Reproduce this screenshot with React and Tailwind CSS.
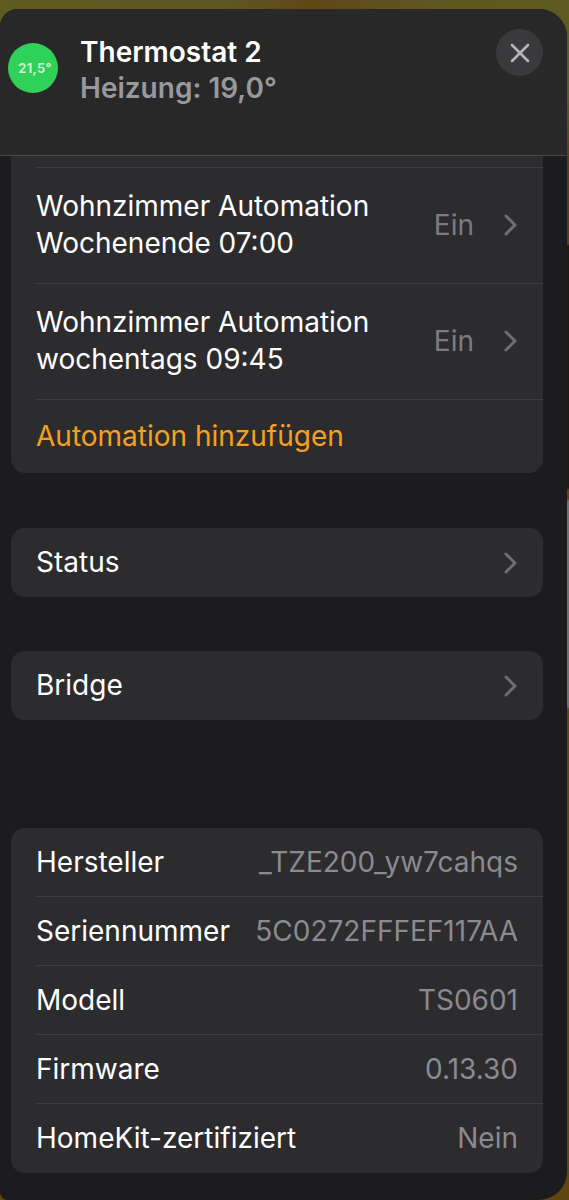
import { X } from "lucide-react";

const automations = [
    { title: "Wohnzimmer Automation Wochenende 07:00", state: "Ein" },
    { title: "Wohnzimmer Automation wochentags 09:45", state: "Ein" },
];

const details = [
    { label: "Hersteller", value: "_TZE200_yw7cahqs" },
    { label: "Seriennummer", value: "5C0272FFFEF117AA" },
    { label: "Modell", value: "TS0601" },
    { label: "Firmware", value: "0.13.30" },
    { label: "HomeKit-zertifiziert", value: "Nein" },
];

function Chevron() {
    return (
        <svg className="h-6 w-4 shrink-0 text-[#6f6f73]" viewBox="0 0 16 24" fill="none" stroke="currentColor" strokeWidth="3" strokeLinecap="round" strokeLinejoin="round">
            <path d="M4 3 13 12 4 21" />
        </svg>
    );
}

function Header() {
    return (
        <header className="flex h-[147px] items-start border-b border-[#48484a] bg-[#282828] pr-6 pl-2">
            <div className="mt-[34px] flex size-[50px] shrink-0 items-center justify-center rounded-full bg-[#30d158] pl-1 text-[13px] font-semibold tracking-wide text-[#d6f7de]">
                21,5°
            </div>
            <div className="mt-[25px] ml-[22px] grow text-[28px] leading-9 font-semibold">
                <h1 className="text-white">Thermostat 2</h1>
                <p className="text-[#98989f]">Heizung: 19,0°</p>
            </div>
            <button type="button" aria-label="Schließen" className="mt-5 flex size-[47px] items-center justify-center rounded-full bg-[#3a3a3c] text-[#b4b4b9]">
                <X size={32} strokeWidth={2} />
            </button>
        </header>
    );
}

function LinkCard({ label }) {
    return (
        <button type="button" className="flex h-[69px] w-full items-center justify-between rounded-[14px] bg-[#2c2c2e] px-[25px]">
            {label}
            <Chevron />
        </button>
    );
}

export default function App() {
    return (
        // wallpaper behind the sheet
        <div className="bg-[linear-gradient(to_bottom,#5f5a20_0px,#5f5a20_90px,#5c3c12_160px,#5c3c12_244px,#24180c_246px,#24180c_488px,#6b3d12_490px,#6b3d12_499px,#707070_501px,#707070_707px,#60450f_709px,#60450f_100%)] font-[Inter,sans-serif]">
            <div className="bg-[linear-gradient(to_right,#5f5a22,#5f5520_40%,#604716_55%,#5f5520_75%,#5f5a20)] bg-[length:100%_30px] bg-no-repeat pt-[9px] pr-[2px]">
                <main className="overflow-hidden rounded-tl-[18px] rounded-tr-[28px] rounded-br-[28px] rounded-bl-lg bg-[#1c1c1e] text-[28px] leading-[37px] text-white">
                    <Header />
                    <div className="pr-6 pb-[27px] pl-[11px]">
                        <section className="rounded-b-[14px] bg-[#2c2c2e] pt-[11px] pl-[25px]">
                            {automations.map((item) => (
                                <button type="button" key={item.title} className="flex w-full items-center border-t border-[#3d3d40] pt-5 pr-[25px] pb-[21px] text-left">
                                    <span className="w-[350px]">{item.title}</span>
                                    <span className="ml-auto text-[#7c7c80]">{item.state}</span>
                                    <span className="ml-7"><Chevron /></span>
                                </button>
                            ))}
                            <button type="button" className="flex h-[74px] w-full items-center border-t border-[#3d3d40] text-[#f7a01f]">
                                Automation hinzufügen
                            </button>
                        </section>
                        <div className="mt-[55px] flex flex-col gap-[54px]">
                            <LinkCard label="Status" />
                            <LinkCard label="Bridge" />
                        </div>
                        <dl className="mt-[108px] rounded-[14px] bg-[#2c2c2e] pl-[25px]">
                            {details.map((row) => (
                                <div key={row.label} className="flex h-[69px] items-center justify-between border-b border-[#3d3d40] pr-[25px] last:border-b-0">
                                    <dt>{row.label}</dt>
                                    <dd className="text-[#8a8a8f]">{row.value}</dd>
                                </div>
                            ))}
                        </dl>
                    </div>
                </main>
            </div>
        </div>
    );
}
